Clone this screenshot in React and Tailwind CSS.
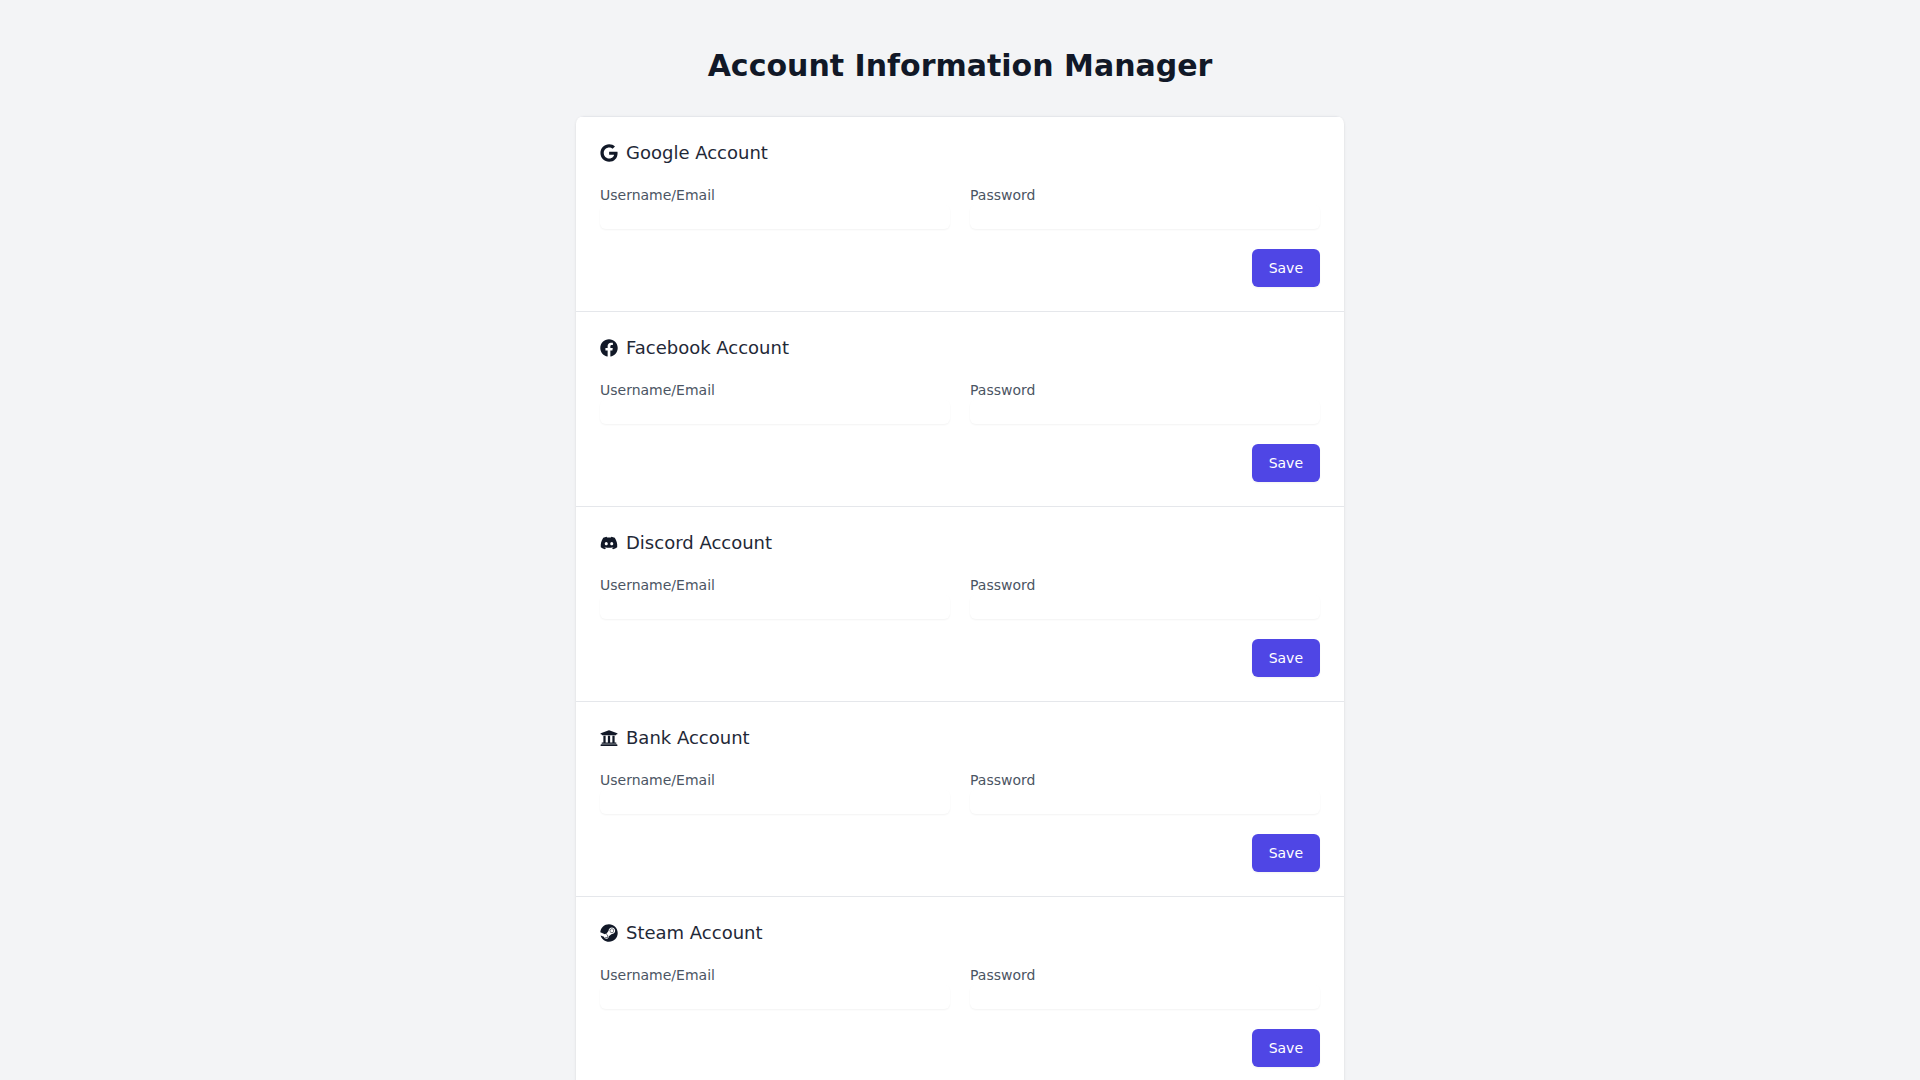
import { FaGoogle, FaFacebook, FaDiscord, FaUniversity, FaSteam } from "react-icons/fa";

const accounts = [
  { name: "Google Account", icon: FaGoogle },
  { name: "Facebook Account", icon: FaFacebook },
  { name: "Discord Account", icon: FaDiscord },
  { name: "Bank Account", icon: FaUniversity },
  { name: "Steam Account", icon: FaSteam },
];

const Field = ({ label, type }) => (
  <div>
    <label className="block text-sm font-medium text-[#4b5563]">{label}</label>
    <input
      type={type}
      className="block w-full rounded-md border-0 shadow-xs focus:outline-none"
    />
  </div>
);

const AccountSection = ({ name, icon: Icon }) => (
  <div className="border-t border-[#e5e7eb] p-6">
    <h2 className="flex items-center gap-2 text-lg font-medium leading-6 text-[#1f2937]">
      <Icon className="h-[18px] w-[18px] text-[#111827]" />
      {name}
    </h2>
    <div className="mt-5 grid grid-cols-2 gap-5">
      <Field label="Username/Email" type="text" />
      <Field label="Password" type="password" />
    </div>
    <div className="mt-5 flex justify-end">
      <button
        type="button"
        className="rounded-md border border-transparent bg-[#4f46e5] px-4 py-2 text-sm font-medium text-white shadow-xs"
      >
        Save
      </button>
    </div>
  </div>
);

export default function App() {
  return (
    <div className="min-h-screen bg-[#f3f4f6] py-12 font-['DejaVu_Sans',sans-serif] antialiased">
      <div className="mx-auto max-w-3xl">
        <h1 className="mb-8 text-center text-3xl font-bold text-[#111827]">
          Account Information Manager
        </h1>
        <div className="overflow-hidden rounded-lg bg-white shadow-sm">
          {accounts.map((account) => (
            <AccountSection key={account.name} {...account} />
          ))}
        </div>
      </div>
    </div>
  );
}
